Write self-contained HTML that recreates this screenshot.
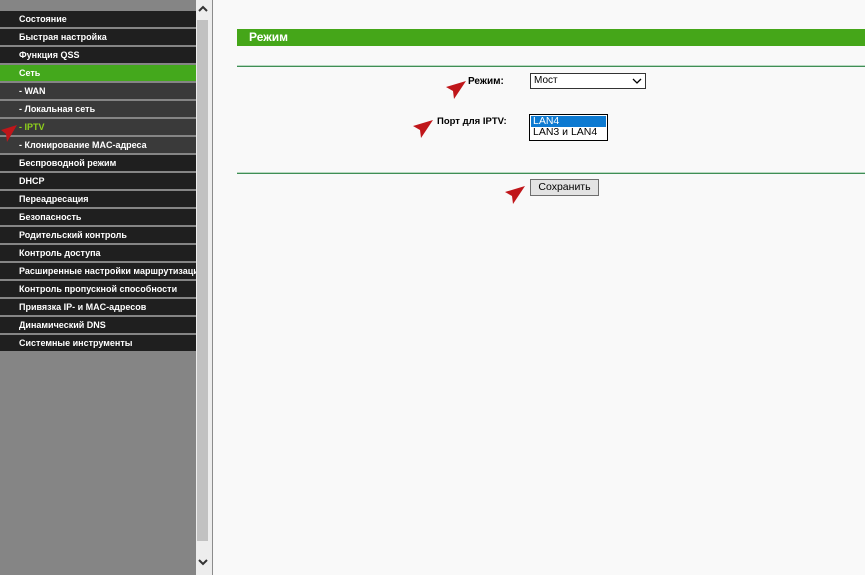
<!DOCTYPE html>
<html><head><meta charset="utf-8"><style>
body{margin:0;width:865px;height:575px;overflow:hidden;background:#f9f9f9;font-family:"Liberation Sans",Arial,sans-serif;position:relative}
#side{position:absolute;left:0;top:0;width:196px;height:575px;background:#858585}
.it{position:absolute;left:0;width:196px;height:16px;background:#1f1f1f;color:#fff;font-size:9px;font-weight:bold;line-height:16px;padding-left:19px;box-sizing:border-box;white-space:nowrap;overflow:hidden}
.sub{background:#3a3a3a}
.act{background:#44a81c}
#sb{position:absolute;left:196px;top:0;width:16px;height:575px;background:#ededed}
#thumb{position:absolute;left:197px;top:20px;width:11px;height:521px;background:#c1c1c1}
#vl{position:absolute;left:212px;top:0;width:1px;height:575px;background:#8c8c8c}
#hdr{position:absolute;left:237px;top:29px;width:628px;height:17px;background:#45a619;color:#fff;font-weight:bold;font-size:12px;line-height:17px;padding-left:12px;box-sizing:border-box}
.ln{position:absolute;left:237px;width:628px;height:1px;background:#3f8e55;border-top:1px solid #b8d8c0}
.lbl{position:absolute;font-size:10px;font-weight:bold;color:#000}
</style></head><body>
<div id="side">
<div class="it" style="top:11px">Состояние</div>
<div class="it" style="top:29px">Быстрая настройка</div>
<div class="it" style="top:47px">Функция QSS</div>
<div class="it act" style="top:65px">Сеть</div>
<div class="it sub" style="top:83px">- WAN</div>
<div class="it sub" style="top:101px">- Локальная сеть</div>
<div class="it sub" style="top:119px;color:#8fd11c">- IPTV</div>
<div class="it sub" style="top:137px">- Клонирование MAC-адреса</div>
<div class="it" style="top:155px">Беспроводной режим</div>
<div class="it" style="top:173px">DHCP</div>
<div class="it" style="top:191px">Переадресация</div>
<div class="it" style="top:209px">Безопасность</div>
<div class="it" style="top:227px">Родительский контроль</div>
<div class="it" style="top:245px">Контроль доступа</div>
<div class="it" style="top:263px">Расширенные настройки маршрутизации</div>
<div class="it" style="top:281px">Контроль пропускной способности</div>
<div class="it" style="top:299px">Привязка IP- и MAC-адресов</div>
<div class="it" style="top:317px">Динамический DNS</div>
<div class="it" style="top:335px">Системные инструменты</div>
</div>
<svg style="position:absolute;left:0;top:122px" width="20" height="22"><path d="M17 3 L1 8 L6 12 L7 20 Z" fill="#c0161a"/></svg>
<div id="sb"></div><div id="thumb"></div><div id="vl"></div>
<svg style="position:absolute;left:198px;top:5px" width="10" height="8"><path d="M1 6 L5 2 L9 6" stroke="#333" stroke-width="2" fill="none"/></svg>
<svg style="position:absolute;left:198px;top:558px" width="10" height="8"><path d="M1 2 L5 6 L9 2" stroke="#333" stroke-width="2" fill="none"/></svg>
<div id="hdr">Режим</div>
<div class="ln" style="top:65px"></div>
<div class="ln" style="top:172px"></div>
<div class="lbl" style="left:468px;top:76px">Режим:</div>
<div style="position:absolute;left:530px;top:73px;width:111px;height:14px;border:1px solid #333;background:#fff;font-size:10px;line-height:14px;padding-left:3px;box-sizing:content-box">Мост<svg style="position:absolute;right:3px;top:4px" width="10" height="7"><path d="M1 1 L5 5 L9 1" stroke="#000" stroke-width="1.3" fill="none"/></svg></div>
<div class="lbl" style="left:437px;top:116px;font-size:9.5px">Порт для IPTV:</div>
<div style="position:absolute;left:529px;top:114px;width:77px;height:25px;border:1px solid #000;background:#fff;font-size:10.5px;line-height:11px">
<div style="background:#0d7ad1;color:#fff;padding-left:2px;margin:1px 1px 0 1px;height:11px">LAN4</div>
<div style="padding-left:3px">LAN3 и LAN4</div></div>
<div style="position:absolute;left:530px;top:179px;width:67px;height:15px;border:1px solid #6e6e6e;background:#e3e3e3;font-size:10.5px;line-height:15px;text-align:center">Сохранить</div>
<svg style="position:absolute;left:444px;top:79px" width="24" height="22"><path d="M22 2 L2 8 L9 12 L10 20 Z" fill="#c0161a"/></svg>
<svg style="position:absolute;left:411px;top:118px" width="24" height="22"><path d="M22 2 L2 8 L9 12 L10 20 Z" fill="#c0161a"/></svg>
<svg style="position:absolute;left:503px;top:184px" width="24" height="22"><path d="M22 2 L2 8 L9 12 L10 20 Z" fill="#c0161a"/></svg>
</body></html>
